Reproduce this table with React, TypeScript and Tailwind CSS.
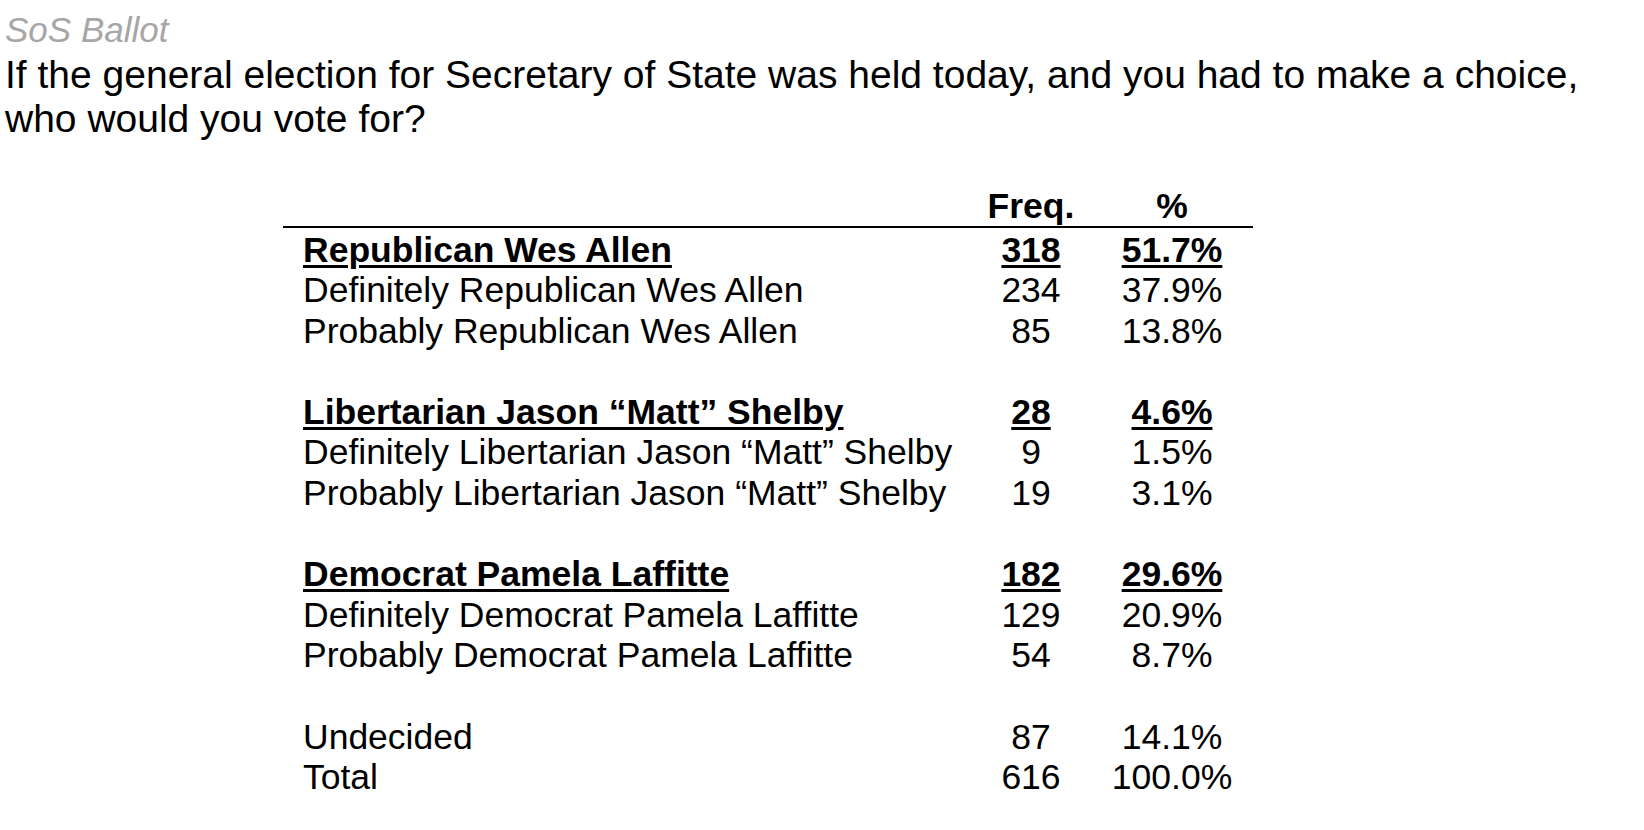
type Row = {
  label: string;
  freq: string;
  pct: string;
  total?: boolean;
};

const groups: Row[][] = [
  [
    { label: "Republican Wes Allen", freq: "318", pct: "51.7%", total: true },
    { label: "Definitely Republican Wes Allen", freq: "234", pct: "37.9%" },
    { label: "Probably Republican Wes Allen", freq: "85", pct: "13.8%" },
  ],
  [
    { label: "Libertarian Jason \u201cMatt\u201d Shelby", freq: "28", pct: "4.6%", total: true },
    { label: "Definitely Libertarian Jason \u201cMatt\u201d Shelby", freq: "9", pct: "1.5%" },
    { label: "Probably Libertarian Jason \u201cMatt\u201d Shelby", freq: "19", pct: "3.1%" },
  ],
  [
    { label: "Democrat Pamela Laffitte", freq: "182", pct: "29.6%", total: true },
    { label: "Definitely Democrat Pamela Laffitte", freq: "129", pct: "20.9%" },
    { label: "Probably Democrat Pamela Laffitte", freq: "54", pct: "8.7%" },
  ],
  [
    { label: "Undecided", freq: "87", pct: "14.1%" },
    { label: "Total", freq: "616", pct: "100.0%" },
  ],
];

function TableRow({ row }: { row: Row }) {
  const strong = row.total
    ? "font-bold underline decoration-[3px] underline-offset-[3px]"
    : "";
  return (
    <div className="grid grid-cols-[678px_140px_142px_10px] h-[40.6px] leading-[40.6px]">
      <div className={`pl-[20px] whitespace-nowrap ${strong}`}>
        {row.label}
      </div>
      <div className="text-center">
        <span className={strong}>{row.freq}</span>
      </div>
      <div className="text-center">
        <span className={strong}>{row.pct}</span>
      </div>
      <div />
    </div>
  );
}

export default function App() {
  return (
    <div
      className="min-h-screen bg-white text-black pl-[5px] pt-[7px] text-[35px]"
      style={{ fontFamily: '"Liberation Sans", Arial, sans-serif' }}
    >
      <div className="italic text-[#a6a6a6] leading-[46px]">SoS Ballot</div>
      <p className="text-[39px] leading-[44px] whitespace-nowrap">
        If the general election for Secretary of State was held today, and you had to make a choice,
        <br />
        who would you vote for?
      </p>

      <div className="ml-[278px] mt-[45px] w-[970px] text-[35.5px]">
        <div className="grid grid-cols-[678px_140px_142px_10px] h-[42px] leading-[40px] font-bold border-b-2 border-black">
          <div />
          <div className="text-center">Freq.</div>
          <div className="text-center">%</div>
          <div />
        </div>
        <div className="mt-[1.5px]">
          {groups.map((group, i) => (
            <div key={i}>
              {group.map((row) => (
                <TableRow key={row.label} row={row} />
              ))}
              {i < groups.length - 1 && <div className="h-[40.6px]" />}
            </div>
          ))}
        </div>
      </div>
    </div>
  );
}
